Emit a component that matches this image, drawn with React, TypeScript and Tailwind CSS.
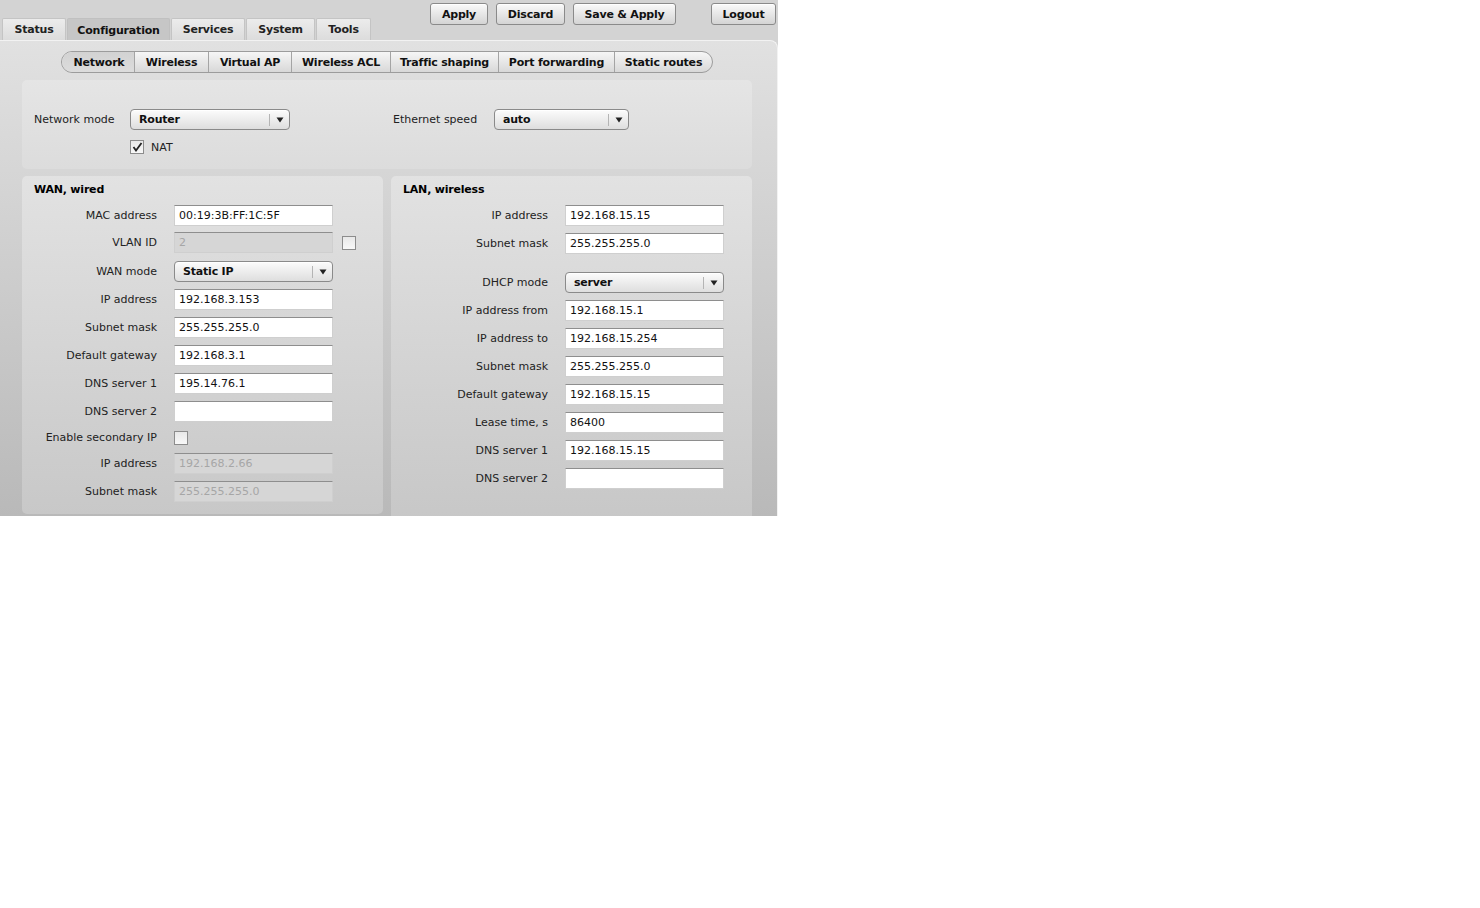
import React from "react";

type Row = {
    label: string;
    value?: string;
    kind?: "input" | "disabled" | "select" | "check";
    top: string;
    extra?: "check";
};

const mainTabs = ["Status", "Configuration", "Services", "System", "Tools"];
const tabWidths = ["w-[64px]", "w-[103px]", "w-[74px]", "w-[69px]", "w-[55px]"];

const subTabs = ["Network", "Wireless", "Virtual AP", "Wireless ACL", "Traffic shaping", "Port forwarding", "Static routes"];
const subWidths = ["w-[72px]", "w-[74px]", "w-[83px]", "w-[99px]", "w-[108px]", "w-[116px]", "w-[98px]"];

const wanRows: Row[] = [
    { label: "MAC address", value: "00:19:3B:FF:1C:5F", top: "mt-0" },
    { label: "VLAN ID", value: "2", kind: "disabled", extra: "check", top: "mt-[6px]" },
    { label: "WAN mode", value: "Static IP", kind: "select", top: "mt-[8px]" },
    { label: "IP address", value: "192.168.3.153", top: "mt-[7px]" },
    { label: "Subnet mask", value: "255.255.255.0", top: "mt-[7px]" },
    { label: "Default gateway", value: "192.168.3.1", top: "mt-[7px]" },
    { label: "DNS server 1", value: "195.14.76.1", top: "mt-[7px]" },
    { label: "DNS server 2", value: "", top: "mt-[7px]" },
    { label: "Enable secondary IP", kind: "check", top: "mt-[5px]" },
    { label: "IP address", value: "192.168.2.66", kind: "disabled", top: "mt-[5px]" },
    { label: "Subnet mask", value: "255.255.255.0", kind: "disabled", top: "mt-[7px]" },
];

const lanRows: Row[] = [
    { label: "IP address", value: "192.168.15.15", top: "mt-0" },
    { label: "Subnet mask", value: "255.255.255.0", top: "mt-[7px]" },
    { label: "DHCP mode", value: "server", kind: "select", top: "mt-[18px]" },
    { label: "IP address from", value: "192.168.15.1", top: "mt-[7px]" },
    { label: "IP address to", value: "192.168.15.254", top: "mt-[7px]" },
    { label: "Subnet mask", value: "255.255.255.0", top: "mt-[7px]" },
    { label: "Default gateway", value: "192.168.15.15", top: "mt-[7px]" },
    { label: "Lease time, s", value: "86400", top: "mt-[7px]" },
    { label: "DNS server 1", value: "192.168.15.15", top: "mt-[7px]" },
    { label: "DNS server 2", value: "", top: "mt-[7px]" },
];

function Arrow() {
    return (
        <svg width="8" height="6" viewBox="0 0 8 6" className="block">
            <path d="M0.5 0.5 L7.5 0.5 L4 5.5 Z" fill="#222" />
        </svg>
    );
}

function Select({ value, width }: { value: string; width: string }) {
    return (
        <div className={`${width} h-[21px] flex items-center rounded-[4px] border border-[#8a8a8a] bg-linear-to-b from-[#fcfcfc] to-[#dedede] shadow-[inset_0_1px_0_#fff]`}>
            <span className="flex-1 pl-[8px] font-bold tracking-[-0.2px] text-[#111]">{value}</span>
            <span className="h-[12px] w-px bg-[#b4b4b4]" />
            <span className="w-[19px] flex justify-center"><Arrow /></span>
        </div>
    );
}

function Check({ checked }: { checked?: boolean }) {
    return (
        <div className="w-[14px] h-[14px] border border-[#8c8c8c] bg-linear-to-b from-[#e8e8e8] to-[#f8f8f8] flex items-center justify-center">
            {checked && (
                <svg width="11" height="10" viewBox="0 0 11 10">
                    <path d="M1.5 5 L4 8.5 L9.5 1" stroke="#222" strokeWidth="1.8" fill="none" />
                </svg>
            )}
        </div>
    );
}

function Field({ value, disabled }: { value: string; disabled?: boolean }) {
    return (
        <div
            className={`w-[159px] h-[21px] flex items-center pl-[4px] border border-[#cfcfcf] border-t-[#8e8e8e] ${disabled ? "bg-[#d6d6d6] text-[#a6a6a6]" : "bg-white text-[#111]"
                }`}
        >
            {value}
        </div>
    );
}

function FormRow({ row, labelWidth }: { row: Row; labelWidth: string }) {
    return (
        <div className={`flex items-center h-[21px] ${row.top}`}>
            <div className={`${labelWidth} text-right text-[#222] pr-[17px]`}>{row.label}</div>
            {row.kind === "select" ? (
                <Select value={row.value ?? ""} width="w-[159px]" />
            ) : row.kind === "check" ? (
                <Check />
            ) : (
                <Field value={row.value ?? ""} disabled={row.kind === "disabled"} />
            )}
            {row.extra === "check" && <div className="ml-[9px]"><Check /></div>}
        </div>
    );
}

export default function App() {
    return (
        <div className="w-[778px] h-[516px] overflow-hidden font-['DejaVu_Sans',sans-serif] text-[11px] leading-[13px] bg-[#d3d3d3]">
            {/* header: section tabs on the left, actions on the right */}
            <div className="h-[40px] flex justify-between">
                <div className="flex gap-px self-end pl-[2px]">
                    {mainTabs.map((t, i) => (
                        <div
                            key={t}
                            className={`${tabWidths[i]} h-[22px] flex items-center justify-center font-bold tracking-[-0.2px] rounded-t-[2px] border border-b-0 ${t === "Configuration"
                                ? "bg-[#c6c6c6] border-[#c0c0c0] pt-[2px] text-[#111]"
                                : "bg-linear-to-b from-[#ececec] to-[#dcdcdc] border-[#c4c4c4] text-[#222] pb-[1px]"
                                }`}
                        >
                            {t}
                        </div>
                    ))}
                </div>
                <div className="flex self-start mt-[3px] pr-[2px]">
                    {[
                        ["Apply", "w-[58px]", ""],
                        ["Discard", "w-[69px]", "ml-[8px]"],
                        ["Save & Apply", "w-[103px]", "ml-[8px]"],
                        ["Logout", "w-[65px]", "ml-[35px]"],
                    ].map(([t, w, m]) => (
                        <div
                            key={t}
                            className={`${w} ${m} h-[22px] flex items-center justify-center font-bold tracking-[-0.2px] text-[#111] rounded-[3px] border border-[#8a8a8a] bg-linear-to-b from-[#fafafa] to-[#d4d4d4] shadow-[inset_0_1px_0_#fff]`}
                        >
                            {t}
                        </div>
                    ))}
                </div>
            </div>

            {/* content panel */}
            <div className="h-[476px] rounded-tr-[8px] border-t border-r border-[#f2f2f2] bg-linear-to-b from-[#e1e1e1] to-[#b9b9b9] px-[22px] pt-[10px]">
                <div className="ml-[39px] flex h-[22px] rounded-full border border-[#9c9c9c] overflow-hidden w-[652px] bg-linear-to-b from-[#f6f6f6] to-[#d8d8d8]">
                    {subTabs.map((t, i) => (
                        <div
                            key={t}
                            className={`${subWidths[i]} flex items-center justify-center font-bold tracking-[-0.2px] text-[#111] ${i > 0 ? "border-l border-[#a4a4a4]" : ""} ${t === "Network" ? "bg-linear-to-b from-[#d2d2d2] to-[#dcdcdc] pl-[2px]" : ""
                                }`}
                        >
                            {t}
                        </div>
                    ))}
                </div>

                {/* mode box */}
                <div className="mt-[7px] w-[730px] h-[89px] rounded-[5px] bg-linear-to-b from-[#e5e5e5] to-[#dcdcdc] pl-[12px] pt-[29px]">
                    <div className="flex items-center h-[21px]">
                        <div className="w-[96px] text-[#222]">Network mode</div>
                        <Select value="Router" width="w-[160px]" />
                        <div className="ml-[103px] w-[101px] text-[#222]">Ethernet speed</div>
                        <Select value="auto" width="w-[135px]" />
                    </div>
                    <div className="flex items-center mt-[10px] ml-[96px]">
                        <Check checked />
                        <span className="ml-[7px] text-[#222]">NAT</span>
                    </div>
                </div>

                <div className="mt-[7px] flex gap-[8px]">
                    <div className="w-[361px] h-[338px] rounded-[5px] bg-linear-to-b from-[#e2e2e2] to-[#c8c8c8] pl-[12px] pt-[7px]">
                        <div className="font-bold tracking-[-0.2px] text-black">WAN, wired</div>
                        <div className="mt-[9px]">
                            {wanRows.map((r, i) => (
                                <FormRow key={i} row={r} labelWidth="w-[140px]" />
                            ))}
                        </div>
                    </div>
                    <div className="w-[361px] h-[360px] rounded-[5px] bg-linear-to-b from-[#e2e2e2] to-[#c6c6c6] pl-[12px] pt-[7px]">
                        <div className="font-bold tracking-[-0.2px] text-black">LAN, wireless</div>
                        <div className="mt-[9px]">
                            {lanRows.map((r, i) => (
                                <FormRow key={i} row={r} labelWidth="w-[162px]" />
                            ))}
                        </div>
                    </div>
                </div>
            </div>
        </div>
    );
}
